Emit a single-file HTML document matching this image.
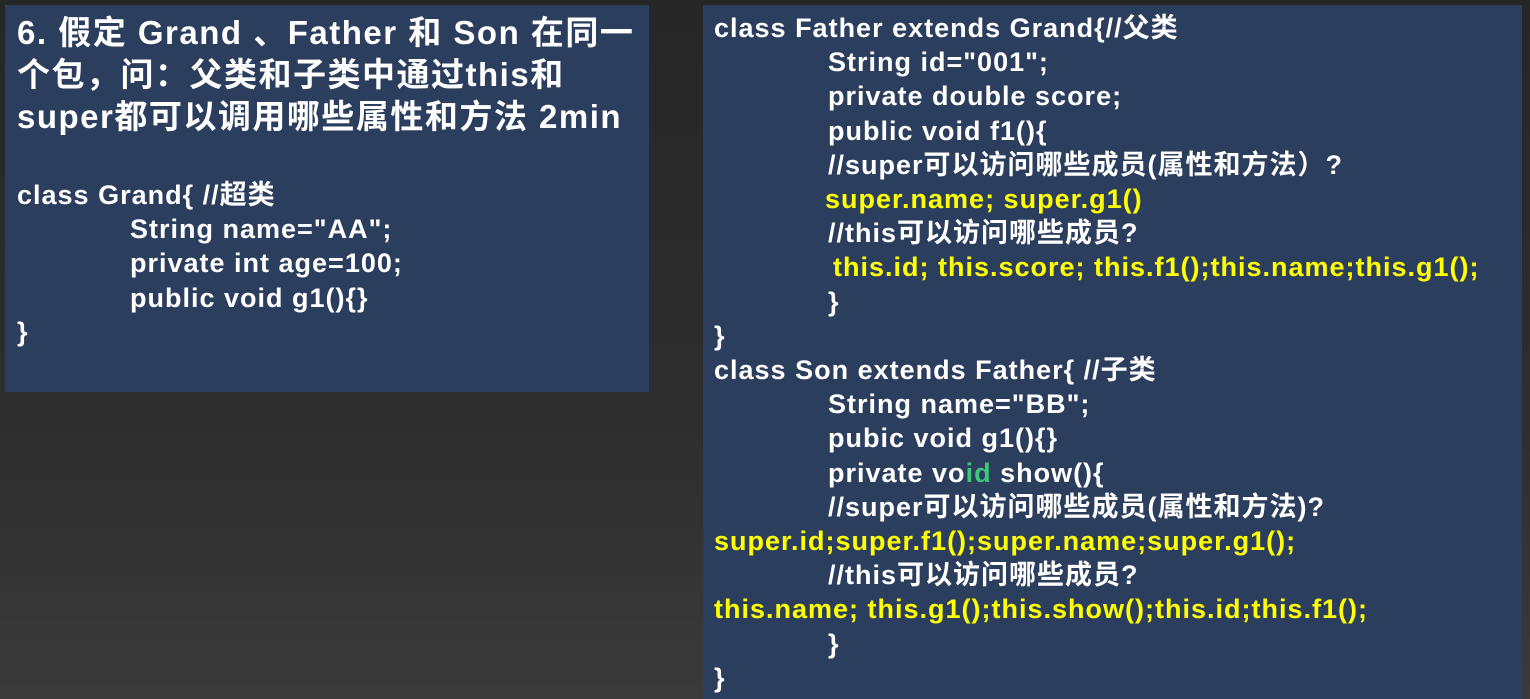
<!DOCTYPE html>
<html><head><meta charset="utf-8"><style>
*{margin:0;padding:0}
body{width:1530px;height:699px;overflow:hidden;background:linear-gradient(180deg,#262626 0%,#2e2e2e 60%,#3a3a3a 100%);position:relative;font-family:"Liberation Sans","Noto Sans CJK SC",sans-serif;font-weight:bold;color:#fff}
.box{position:absolute;background:#2c3e5e}
.l{left:5px;top:5px;width:644px;height:387px}
.r{left:703px;top:5px;width:819px;height:694px}
.t{position:absolute;white-space:nowrap}
.h{font-size:33px;line-height:42px;letter-spacing:1.5px}
.c{font-size:27px;line-height:34.2px;letter-spacing:1px}
.y{color:#ffff00}
.g{color:#3cc878}
</style></head><body>
<div class="box l"></div>
<div class="box r"></div>
<div class="t h" style="left:17px;top:12px">6. 假定 Grand 、Father 和 Son 在同一<br>个包，问：父类和子类中通过this和<br>super都可以调用哪些属性和方法 2min</div>
<div class="t c" style="left:17px;top:178px">class Grand{ //超类<br><span style="padding-left:113px">String name="AA";</span><br><span style="padding-left:113px">private int age=100;</span><br><span style="padding-left:113px">public void g1(){}</span><br>}</div>
<div class="t c" style="left:714px;top:11px">class Father extends Grand{//父类<br>
<span style="padding-left:114px">String id="001";</span><br>
<span style="padding-left:114px">private double score;</span><br>
<span style="padding-left:114px">public void f1(){</span><br>
<span style="padding-left:114px">//super可以访问哪些成员(属性和方法）?</span><br>
<span class="y" style="padding-left:111px">super.name; super.g1()</span><br>
<span style="padding-left:114px">//this可以访问哪些成员?</span><br>
<span class="y" style="padding-left:119px">this.id; this.score; this.f1();this.name;this.g1();</span><br>
<span style="padding-left:114px">}</span><br>
}<br>
class Son extends Father{ //子类<br>
<span style="padding-left:114px">String name="BB";</span><br>
<span style="padding-left:114px">pubic void g1(){}</span><br>
<span style="padding-left:114px">private vo<span class="g">id</span> show(){</span><br>
<span style="padding-left:114px">//super可以访问哪些成员(属性和方法)?</span><br>
<span class="y">super.id;super.f1();super.name;super.g1();</span><br>
<span style="padding-left:114px">//this可以访问哪些成员?</span><br>
<span class="y">this.name; this.g1();this.show();this.id;this.f1();</span><br>
<span style="padding-left:114px">}</span><br>
}</div>
</body></html>
